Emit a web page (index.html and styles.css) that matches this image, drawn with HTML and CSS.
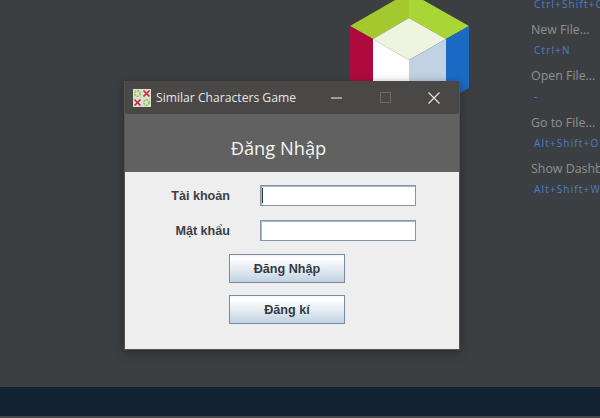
FILE: index.html
```html
<!DOCTYPE html>
<html lang="vi">
<head>
<meta charset="utf-8">
<title>Similar Characters Game</title>
<link rel="stylesheet" href="styles.css">
</head>
<body>
<div class="desktop">
  <svg class="logo" width="140" height="110" viewBox="340 0 140 110">
    <polygon points="350,26 409,-8 409,18 373,39" fill="#a3c92e"/>
    <polygon points="409,-8 469,26 446,39 409,18" fill="#a9d636"/>
    <polygon points="409,18 446,39 409,60 373,39" fill="#eff4e0"/>
    <polygon points="350,26 373,39 373,90 350,80" fill="#ae0a3f"/>
    <polygon points="373,39 409,60 409,100 373,90" fill="#ffffff"/>
    <polygon points="409,60 446,39 446,90 409,100" fill="#c2d2e2"/>
    <polygon points="446,39 469,26 469,88 446,101" fill="#1b6ac6"/>
  </svg>

  <aside class="shortcuts">
    <div class="item item-cut"><span class="keys">Ctrl+Shift+O</span></div>
    <div class="item"><span class="name">New File...</span><span class="keys">Ctrl+N</span></div>
    <div class="item"><span class="name">Open File...</span><span class="keys">-</span></div>
    <div class="item"><span class="name">Go to File...</span><span class="keys">Alt+Shift+O</span></div>
    <div class="item"><span class="name">Show Dashboard</span><span class="keys">Alt+Shift+W</span></div>
  </aside>

  <div class="statusbar"></div>

  <section class="window">
    <header class="titlebar">
      <svg class="app-icon" width="18" height="18" viewBox="0 0 18 18">
        <rect width="18" height="18" fill="#d9e0cf"/>
        <circle cx="4.5" cy="4.5" r="2.7" fill="none" stroke="#8cc63f" stroke-width="1.6" stroke-dasharray="2 1"/>
        <circle cx="13.5" cy="13.5" r="2.7" fill="none" stroke="#8cc63f" stroke-width="1.6" stroke-dasharray="2 1"/>
        <path d="M10.5 1.5l6 6m0-6l-6 6M1.5 10.5l6 6m0-6l-6 6" stroke="#cf2038" stroke-width="1.6"/>
      </svg>
      <span class="app-title">Similar Characters Game</span>
      <div class="controls">
        <svg width="12" height="12" viewBox="0 0 12 12"><path d="M0 6h11" stroke="#f2f2f2" stroke-width="1"/></svg>
        <svg width="12" height="12" viewBox="0 0 12 12"><path d="M.5.5h10v10h-10z" fill="none" stroke="#6c6a67" stroke-width="1"/></svg>
        <svg width="12" height="12" viewBox="0 0 12 12"><path d="M.5.500l11 11m0-11l-11 11" stroke="#e8e8e8" stroke-width="1.1"/></svg>
      </div>
    </header>
    <div class="banner"><h1>Đăng Nhập</h1></div>
    <form class="form">
      <div class="row"><label class="label">Tài khoản</label><div class="field focused"></div></div>
      <div class="row"><label class="label">Mật khẩu</label><div class="field"></div></div>
      <div class="btn">Đăng Nhập</div>
      <div class="btn">Đăng kí</div>
    </form>
  </section>
</div>
</body>
</html>
```
FILE: styles.css
```css
* { box-sizing: border-box; }
html, body { margin: 0; padding: 0; }
body { width: 600px; height: 418px; overflow: hidden; background: #3c3f41; }
.desktop { position: relative; width: 600px; height: 418px; overflow: hidden; background: #3c3f41; }

.logo { position: absolute; left: 340px; top: 0; }

.shortcuts { position: absolute; left: 531px; top: -8px; width: 90px; font-family: "Open Sans", sans-serif; display: flex; flex-direction: column; }
.item { display: flex; flex-direction: column; height: 46.300px; padding-top: 1px; }
.item-cut { height: 28px; padding-top: 0; padding-left: 3px; }
.name { font-size: 12.400px; line-height: 17px; color: #8f9091; white-space: nowrap; }
.keys { font-size: 10px; line-height: 14px; margin-top: 5px; letter-spacing: 1.150px; color: #4e7dca; padding-left: 3px; white-space: nowrap; }
.item-cut .keys { padding-left: 0; }

.statusbar { position: absolute; left: 0; top: 387px; width: 600px; height: 30px; background: #132231; }
.desktop::after { content: ""; position: absolute; left: 0; top: 416px; width: 600px; height: 2px; background: #45484b; }

.window { position: absolute; left: 124px; top: 81px; width: 336px; height: 269px; display: flex; flex-direction: column; background: #4a4846; border: 1px solid #555350; border-top: 0; box-shadow: 0 3px 9px rgba(28, 30, 32, .55); }
.titlebar { height: 33px; flex: none; display: flex; align-items: center; padding-left: 8px; background: #4a4846; }
.app-icon { flex: none; }
.app-title { margin-left: 5px; font-family: "Open Sans", sans-serif; font-size: 12.150px; color: #e6e6e6; white-space: nowrap; }
.controls { margin-left: auto; display: flex; gap: 36.500px; padding-right: 19px; }
.banner { height: 58px; flex: none; background: #616161; display: flex; align-items: center; justify-content: center; }
.banner h1 { margin: 0; font-family: "Open Sans", sans-serif; font-weight: 400; font-size: 18.300px; color: #f4f4f4; padding-top: 8px; padding-right: 27px; }
.form { flex: 1; background: #eeeeee; display: flex; flex-direction: column; align-items: center; padding-top: 13px; }
.row { display: flex; align-items: center; justify-content: flex-end; width: 100%; height: 21px; margin-bottom: 14px; padding-right: 43px; }
.label { font-family: "Liberation Sans", sans-serif; font-weight: 700; font-size: 12.600px; color: #3a3f45; margin-right: 30px; }
.field { width: 156px; height: 21px; background: #fff; border: 1px solid #8498ad; box-shadow: inset 1px 1px 0 #a9b6c4; }
.field.focused { position: relative; }
.field.focused::before { content: ""; position: absolute; left: 1px; top: 2px; width: 1px; height: 15px; background: #333; }
.btn { width: 116px; height: 29px; margin-bottom: 12px; margin-right: 10px; display: flex; align-items: center; justify-content: center; font-family: "Liberation Sans", sans-serif; font-weight: 700; font-size: 12.600px; color: #33393f; border: 1px solid #7a8a9c; background: linear-gradient(#f3f7fa 0%, #ffffff 12%, #e6edf3 50%, #c0d2e2 100%); }
.row + .btn { margin-top: -1px; }
```
